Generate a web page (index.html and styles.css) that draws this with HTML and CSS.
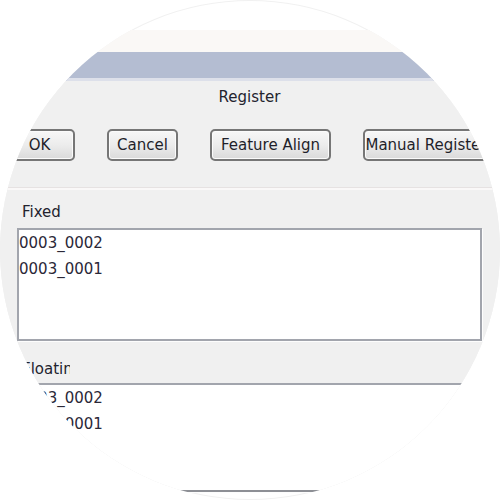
FILE: index.html
```html
<!DOCTYPE html>
<html lang="en">
<head>
  <meta charset="UTF-8">
  <title>Register</title>
  <link rel="stylesheet" href="styles.css">
</head>
<body>

  <!-- Round magnified view of the dialog -->
  <div class="lens">
    <div class="window">
      <div class="window-top"></div>
      <div class="titlebar"></div>

      <div class="dialog-body">
        <div class="dialog-title">Register</div>

        <div class="button-row">
          <button class="btn btn-ok">OK</button>
          <button class="btn btn-cancel">Cancel</button>
          <button class="btn btn-align">Feature Align</button>
          <button class="btn btn-manual">Manual Register</button>
        </div>

        <div class="separator"></div>

        <!-- Fixed images -->
        <div class="group-label">Fixed</div>
        <div class="listbox listbox-fixed">
          <div class="list-item">0003_0002</div>
          <div class="list-item">0003_0001</div>
        </div>

        <!-- Floating images -->
        <div class="group-label group-label-cut">Floating</div>
        <div class="listbox listbox-floating">
          <div class="list-item">0003_0002</div>
          <div class="list-item">0003_0001</div>
        </div>
      </div>
    </div>
  </div>

</body>
</html>
```

FILE: styles.css
```css
body {
  margin: 0;
  padding: 0;
  background-color: #fff;
  font-family: 'DejaVu Sans', Verdana, sans-serif;
  color: #23232e;
}

.lens {
  width: 500px;
  height: 500px;
  border-radius: 50%;
  overflow: hidden;
  background-color: #fff;
  box-shadow: inset 0 0 0 1px #f1f1f1;
}

.window {
  width: 500px;
  margin-top: 30px;
}

.window-top {
  height: 22px;
  background-color: #faf8f6;
}

.titlebar {
  height: 26px;
  background-color: #b4bdd2;
  border-bottom: 3px solid #dde0ea;
}

.dialog-body {
  background-color: #f0f0f0;
  padding: 7px 18px 0 17px;
}

.dialog-title {
  text-align: center;
  font-size: 15px;
  line-height: 18px;
}

/* Button row */
.button-row {
  display: flex;
  gap: 32px;
  margin-top: 23px;
  margin-left: -13px;
  white-space: nowrap;
}

.btn {
  flex: none;
  height: 32px;
  padding: 0;
  font-family: 'DejaVu Sans', Verdana, sans-serif;
  font-size: 15px;
  color: #1f1f2a;
  border: 2px solid #767676;
  border-radius: 5px;
  background: linear-gradient(#f7f7f7, #ececec 50%, #dadada);
  box-shadow: inset 0 0 0 1px #fbfbfb;
  text-align: center;
}

.btn-ok { width: 71px; }
.btn-cancel { width: 71px; }
.btn-align { width: 121px; }
.btn-manual { width: 126px; }

.separator {
  margin-top: 26px;
  margin-left: -17px;
  margin-right: -18px;
  height: 2px;
  border-top: 1px solid #e6e2e2;
  background-color: #faf8f8;
}

.group-label {
  margin-top: 13px;
  padding-left: 5px;
  font-size: 15px;
  line-height: 18px;
}

.group-label-cut {
  width: 48px;
  overflow: hidden;
  white-space: nowrap;
  margin-top: 19px;
}

/* List boxes */
.listbox {
  margin-top: 7px;
  background-color: #fff;
  border: 2px solid #a2a5ad;
  box-shadow: 1px 1px 0 #fdfdfd;
  box-sizing: border-box;
}

.listbox-fixed {
  height: 113px;
}

.listbox-floating {
  margin-top: 5px;
  height: 109px;
  border-bottom-color: #8d8f95;
}

.list-item {
  font-size: 15px;
  line-height: 26px;
  color: #2b2838;
}
```
